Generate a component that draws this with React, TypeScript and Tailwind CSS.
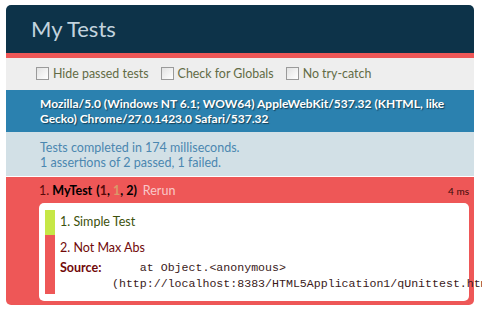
import React from "react";

function Box() {
  return (
    <span className="inline-block w-[13px] h-[13px] border border-[#9a9a9a] bg-gradient-to-br from-[#e2e2e2] to-white shrink-0" />
  );
}

export default function App() {
  const font = { fontFamily: "Lato, 'Noto Sans', sans-serif" };
  return (
    <div className="w-[482px] h-[320px] overflow-hidden bg-white" style={font}>
      <div className="pl-[6px] pr-[8px] pt-[5px]">
        <div className="h-[48px] bg-[#0d3349] rounded-t-[5px] flex items-center pl-[25px]">
          <h1 className="text-[22px] leading-none text-[#c2d3de] font-normal">My Tests</h1>
        </div>
        <div className="h-[5px] bg-[#ee5757]" />
        <div className="h-[32px] bg-[#eeeeee] flex items-center pl-[30px] text-[12.4px] text-[#626b45]">
          <label className="flex items-center gap-[4px] mr-[12px]">
            <Box />
            <span>Hide passed tests</span>
          </label>
          <label className="flex items-center gap-[4px] mr-[12px]">
            <Box />
            <span>Check for Globals</span>
          </label>
          <label className="flex items-center gap-[4px]">
            <Box />
            <span>No try-catch</span>
          </label>
        </div>
        <div
          className="bg-[#2b81af] text-white font-bold text-[12px] leading-[15px] pl-[34px] pr-[4px] pt-[6px] pb-[6px] whitespace-nowrap"
          style={{ textShadow: "rgba(0,0,0,0.5) 1px 1px 1px" }}
        >
          <div>Mozilla/5.0 (Windows NT 6.1; WOW64) AppleWebKit/537.32 (KHTML, like</div>
          <div>Gecko) Chrome/27.0.1423.0 Safari/537.32</div>
        </div>
        <div className="bg-[#d2e0e6] text-[#4b87b0] text-[12.5px] leading-[15px] pl-[34px] pt-[8px] pb-[6px] border-b border-white">
          <div>Tests completed in 174 milliseconds.</div>
          <div>1 assertions of 2 passed, 1 failed.</div>
        </div>
        <div className="bg-[#ee5757] rounded-b-[5px] pl-[33px] pr-[5px] pt-[6px] pb-[4px]">
          <div className="flex items-center h-[16px] text-[12.5px]">
            <span className="text-[#5a0a0a]">1. </span>
            <b className="text-black ml-[3px]">MyTest</b>
            <b className="text-black ml-[4px]">
              (<span className="text-[#5a0a0a]">1</span>, <span className="text-[#d99a6a]">1</span>, 2)
            </b>
            <span className="ml-[6px] text-[#f9c9c9]">Rerun</span>
            <span className="ml-auto text-[10px] text-[#3a0a0a]">4 ms</span>
          </div>
          <div className="mt-[4px] bg-white rounded-[5px] pl-[6px] pr-[6px] pt-[7px] pb-[7px]">
            <div className="border-l-[10px] border-[#c6e746] h-[25px] flex items-center pl-[5px] text-[12.5px] text-[#3c510c]">
              1. Simple Test
            </div>
            <div className="border-l-[10px] border-[#ee5757] pl-[5px] pt-[4px] pb-[2px] text-[12.5px] text-[#710909]">
              <div className="leading-[18px]">2. Not Max Abs</div>
              <div className="flex mt-[3px]">
                <span className="font-bold w-[52px] shrink-0 leading-[16px]">Source:</span>
                <pre
                  className="text-[11.6px] leading-[16px] text-[#3a1a1a] whitespace-pre"
                  style={{ fontFamily: "'Liberation Mono', monospace" }}
                >
{"    at Object.<anonymous>\n(http://localhost:8383/HTML5Application1/qUnittest.html:15:9)"}
                </pre>
              </div>
            </div>
          </div>
        </div>
      </div>
    </div>
  );
}
